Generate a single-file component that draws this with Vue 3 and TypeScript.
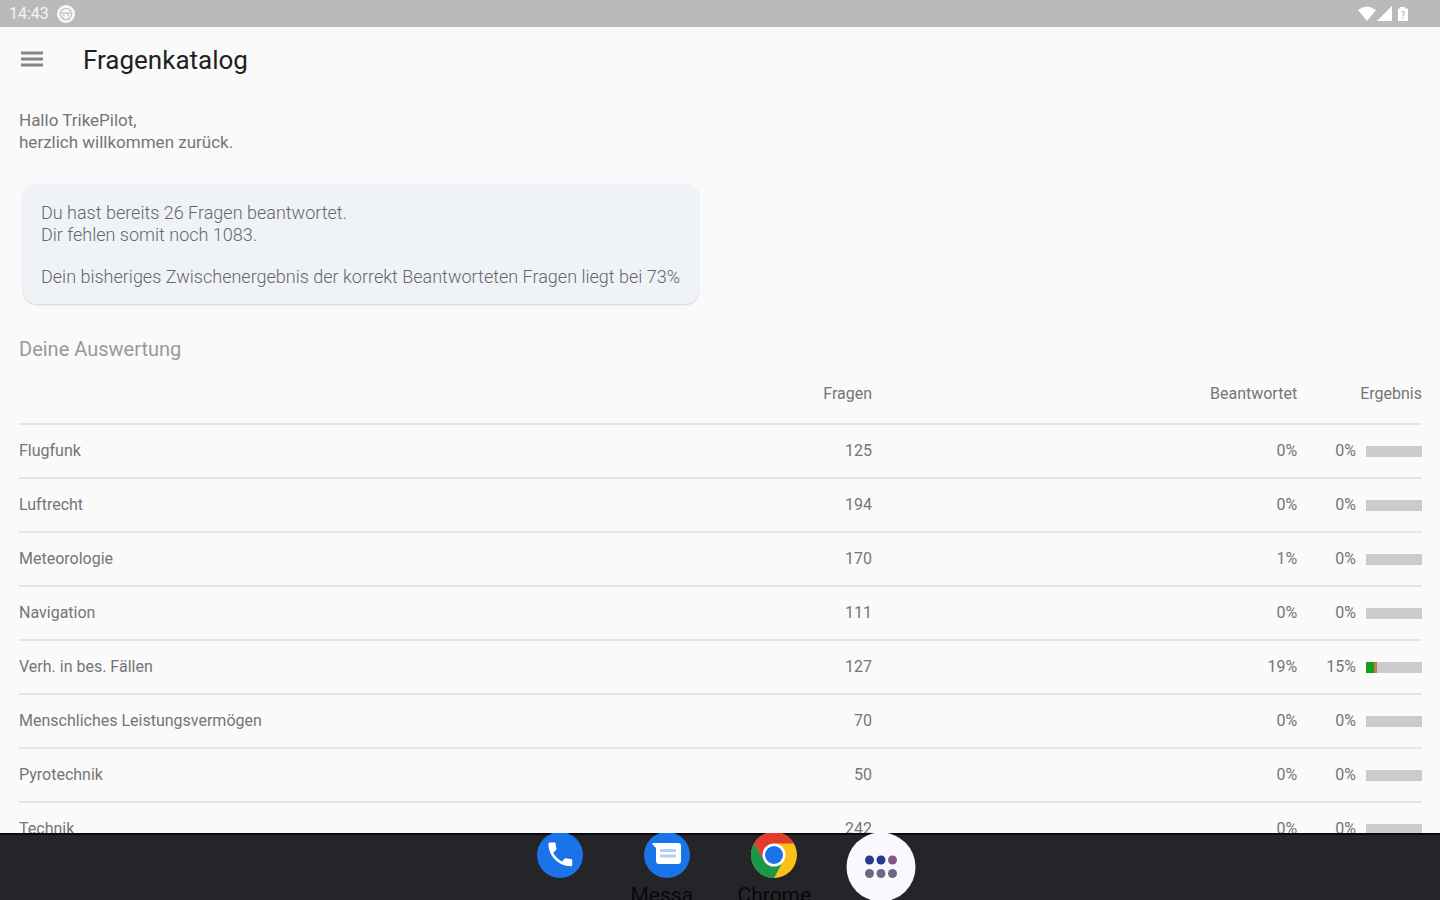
<script setup lang="ts">
interface Topic {
  name: string
  questions: number
  answered: number
  result: number
  correct: number
  wrong: number
}

const topics: Topic[] = [
  { name: 'Flugfunk', questions: 125, answered: 0, result: 0, correct: 0, wrong: 0 },
  { name: 'Luftrecht', questions: 194, answered: 0, result: 0, correct: 0, wrong: 0 },
  { name: 'Meteorologie', questions: 170, answered: 1, result: 0, correct: 0, wrong: 0 },
  { name: 'Navigation', questions: 111, answered: 0, result: 0, correct: 0, wrong: 0 },
  { name: 'Verh. in bes. Fällen', questions: 127, answered: 19, result: 15, correct: 15, wrong: 4 },
  { name: 'Menschliches Leistungsvermögen', questions: 70, answered: 0, result: 0, correct: 0, wrong: 0 },
  { name: 'Pyrotechnik', questions: 50, answered: 0, result: 0, correct: 0, wrong: 0 },
  { name: 'Technik', questions: 242, answered: 0, result: 0, correct: 0, wrong: 0 },
]
</script>

<template>
  <div class="screen">
    <div class="status">
      <span class="clock">14:43</span>
      <svg class="face" viewBox="0 0 18 18" aria-hidden="true">
        <circle cx="9" cy="9" r="9" fill="#f8f8f8" />
        <circle cx="9" cy="9" r="5.6" fill="none" stroke="#c3c3c3" stroke-width="1.4" />
        <path d="M5 8.2h8M6.8 9.5v2M11.2 9.5v2" stroke="#c3c3c3" stroke-width="1.5" />
      </svg>
      <span class="spacer"></span>
      <svg class="signals" viewBox="0 0 54 16" aria-hidden="true">
        <path d="M0 4Q9-3 18 4L9 15Z" fill="#fff" />
        <path d="M34 0v15H19Z" fill="#fff" />
        <path d="M42 1h5v1.5h3V15H40V2.500h2Z" fill="#fff" />
        <path d="M43.500 6.500q1.500-2 3 0q0 1.500-1.500 2.500v1M45 11v1.500" fill="none" stroke="#bdbdbd" stroke-width="1.200" />
      </svg>
    </div>

    <header class="appbar">
      <button class="menu" type="button" aria-label="Menü">
        <svg viewBox="0 0 22 18" aria-hidden="true">
          <path d="M0 2h22M0 8h22M0 14h22" stroke="#858585" stroke-width="3" />
        </svg>
      </button>
      <h1>Fragenkatalog</h1>
    </header>

    <main class="content">
      <p class="greeting">Hallo TrikePilot,<br />herzlich willkommen zurück.</p>

      <section class="card">
        <p>Du hast bereits 26 Fragen beantwortet.<br />Dir fehlen somit noch 1083.</p>
        <p>Dein bisheriges Zwischenergebnis der korrekt Beantworteten Fragen liegt bei 73%</p>
      </section>

      <h2>Deine Auswertung</h2>

      <table>
        <colgroup>
          <col class="c-name" />
          <col class="c-questions" />
          <col class="c-answered" />
          <col class="c-result" />
        </colgroup>
        <thead>
          <tr>
            <th scope="col" aria-label="Thema"></th>
            <th scope="col">Fragen</th>
            <th scope="col">Beantwortet</th>
            <th scope="col">Ergebnis</th>
          </tr>
        </thead>
        <tbody>
          <tr v-for="t in topics" :key="t.name">
            <td>{{ t.name }}</td>
            <td>{{ t.questions }}</td>
            <td>{{ t.answered }}%</td>
            <td>
              <div class="result">
                <span>{{ t.result }}%</span>
                <div class="bar">
                  <div class="correct" :style="{ width: t.correct + '%' }"></div>
                  <div class="wrong" :style="{ width: t.wrong + '%' }"></div>
                </div>
              </div>
            </td>
          </tr>
        </tbody>
      </table>
    </main>

    <nav class="dock">
      <button class="app" type="button" aria-label="Telefon">
        <svg class="icon" viewBox="0 0 46 46" aria-hidden="true">
          <circle cx="23" cy="23" r="23" fill="#1a73e8" />
          <path transform="translate(7.500 6.500) scale(1.320)" fill="#fff" d="M6.620 10.790c1.440 2.830 3.760 5.140 6.590 6.590l2.200-2.200c.27-.27.67-.36 1.020-.24 1.120.37 2.330.57 3.570.57.55 0 1 .45 1 1V20c0 .55-.45 1-1 1-9.390 0-17-7.610-17-17 0-.55.45-1 1-1h3.500c.55 0 1 .45 1 1 0 1.250.2 2.450.57 3.570.11.35.03.74-.25 1.020l-2.200 2.200z" />
        </svg>
      </button>
      <button class="app" type="button">
        <svg class="icon" viewBox="0 0 46 46" aria-hidden="true">
          <circle cx="23" cy="23" r="23" fill="#1a73e8" />
          <path d="M9 11h25a3 3 0 0 1 3 3v15a3 3 0 0 1-3 3H15a3 3 0 0 1-3-3V16L8 12Z" fill="#fff" />
          <path d="M16 18.500h16M16 24h16" stroke="#b4cdf8" stroke-width="3" />
        </svg>
        <span class="label">Messa</span>
      </button>
      <button class="app" type="button">
        <svg class="icon" viewBox="0 0 46 46" aria-hidden="true">
          <circle cx="23" cy="23" r="23" fill="#fbc116" />
          <path d="M23 23 13.500 28.500 3.080 11.500A23 23 0 0 0 23 46L32.500 28.500Z" fill="#1e9648" />
          <path d="M3.080 11.500A23 23 0 0 1 42.920 11.500H23V23L13.500 28.500Z" fill="#e33b2e" />
          <circle cx="23" cy="23" r="11.500" fill="#fff" />
          <circle cx="23" cy="23" r="9" fill="#1a73e8" />
        </svg>
        <span class="label">Chrome</span>
      </button>
      <button class="app" type="button" aria-label="Alle Apps">
        <svg class="all" viewBox="0 0 70 70" aria-hidden="true">
          <circle cx="35" cy="35" r="34.500" fill="#fbf8fd" />
          <circle cx="23.500" cy="28" r="4.500" fill="#243a8c" />
          <circle cx="35" cy="28" r="4.500" fill="#243a8c" />
          <circle cx="46.500" cy="28" r="4.500" fill="#85588c" />
          <circle cx="23.500" cy="41.500" r="4.500" fill="#686b86" />
          <circle cx="35" cy="41.500" r="4.500" fill="#686b86" />
          <circle cx="46.500" cy="41.500" r="4.500" fill="#686b86" />
        </svg>
      </button>
    </nav>
  </div>
</template>

<style>
body {
  margin: 0;
  background: #fafafa;
}
</style>

<style scoped>
.screen {
  display: flex;
  flex-direction: column;
  height: 100vh;
  overflow: hidden;
  background: #fafafa;
  color: #757575;
  font-family: Roboto, "Liberation Sans", sans-serif;
  font-size: 17px;
  line-height: 22px;
}
.status {
  display: flex;
  align-items: center;
  flex: none;
  gap: 8px;
  height: 27px;
  padding: 0 28px 0 9px;
  background: #bababa;
  color: #f5f5f5;
}
.clock {
  font-size: 16px;
}
.face {
  width: 18px;
  height: 18px;
}
.spacer {
  flex: 1;
}
.signals {
  width: 54px;
  height: 16px;
}
.appbar {
  display: flex;
  align-items: center;
  flex: none;
  gap: 40px;
  height: 66px;
  padding: 0 21px;
}
.menu {
  padding: 0;
  border: 0;
  background: none;
}
.menu svg {
  display: block;
  width: 22px;
  height: 18px;
}
h1 {
  margin: 0;
  color: #212121;
  font-size: 26px;
  font-weight: 400;
  line-height: 32px;
}
.content {
  flex: 1;
  min-height: 0;
  overflow: hidden;
  padding: 16px 18px 0 19px;
}
p {
  margin: 0;
}
.card {
  display: flex;
  flex-direction: column;
  gap: 20px;
  width: fit-content;
  box-sizing: border-box;
  margin: 31px 4px 0;
  padding: 18px 19px 16px 18px;
  border-radius: 14px;
  background: #eff3f8;
  box-shadow: 0 1px 2px #00000028;
  color: #666;
  font-size: 18px;
  font-weight: 300;
}
h2 {
  margin: 32px 0 0;
  color: #999;
  font-size: 20px;
  font-weight: 400;
  line-height: 26px;
}
table {
  width: 100%;
  border-collapse: separate;
  border-spacing: 0;
  table-layout: fixed;
  font-size: 16px;
}
.c-name {
  width: 31%;
}
.c-questions {
  width: 29.800%;
}
.c-answered {
  width: 30.300%;
}
th,
td {
  box-sizing: border-box;
  height: 54px;
  padding: 0;
  border-bottom: 2px solid #e4e5e6;
  text-align: right;
  white-space: nowrap;
}
th {
  height: 63px;
  padding-top: 2px;
  font-weight: 400;
}
th:first-child,
td:first-child {
  text-align: left;
}
.result {
  display: flex;
  align-items: center;
  justify-content: flex-end;
  gap: 10px;
}
.bar {
  display: flex;
  width: 56px;
  height: 11px;
  background: #cbcbcb;
}
.correct {
  background: #169c1d;
}
.wrong {
  background: #c47b55;
}
.dock {
  display: flex;
  justify-content: center;
  flex: none;
  height: 67px;
  overflow: hidden;
  background: linear-gradient(#0a0a0c 2px, #252529 2px);
}
.app {
  display: flex;
  flex-direction: column;
  align-items: center;
  flex: none;
  width: 107px;
  margin-top: -1px;
  padding: 0;
  border: 0;
  background: none;
  color: #08080a;
  font: inherit;
}
.icon {
  flex: none;
  width: 46px;
  height: 46px;
}
.all {
  flex: none;
  width: 70px;
  height: 70px;
}
.label {
  width: 72px;
  margin-top: 4px;
  font-size: 21px;
  line-height: 26px;
  text-align: left;
}
</style>
